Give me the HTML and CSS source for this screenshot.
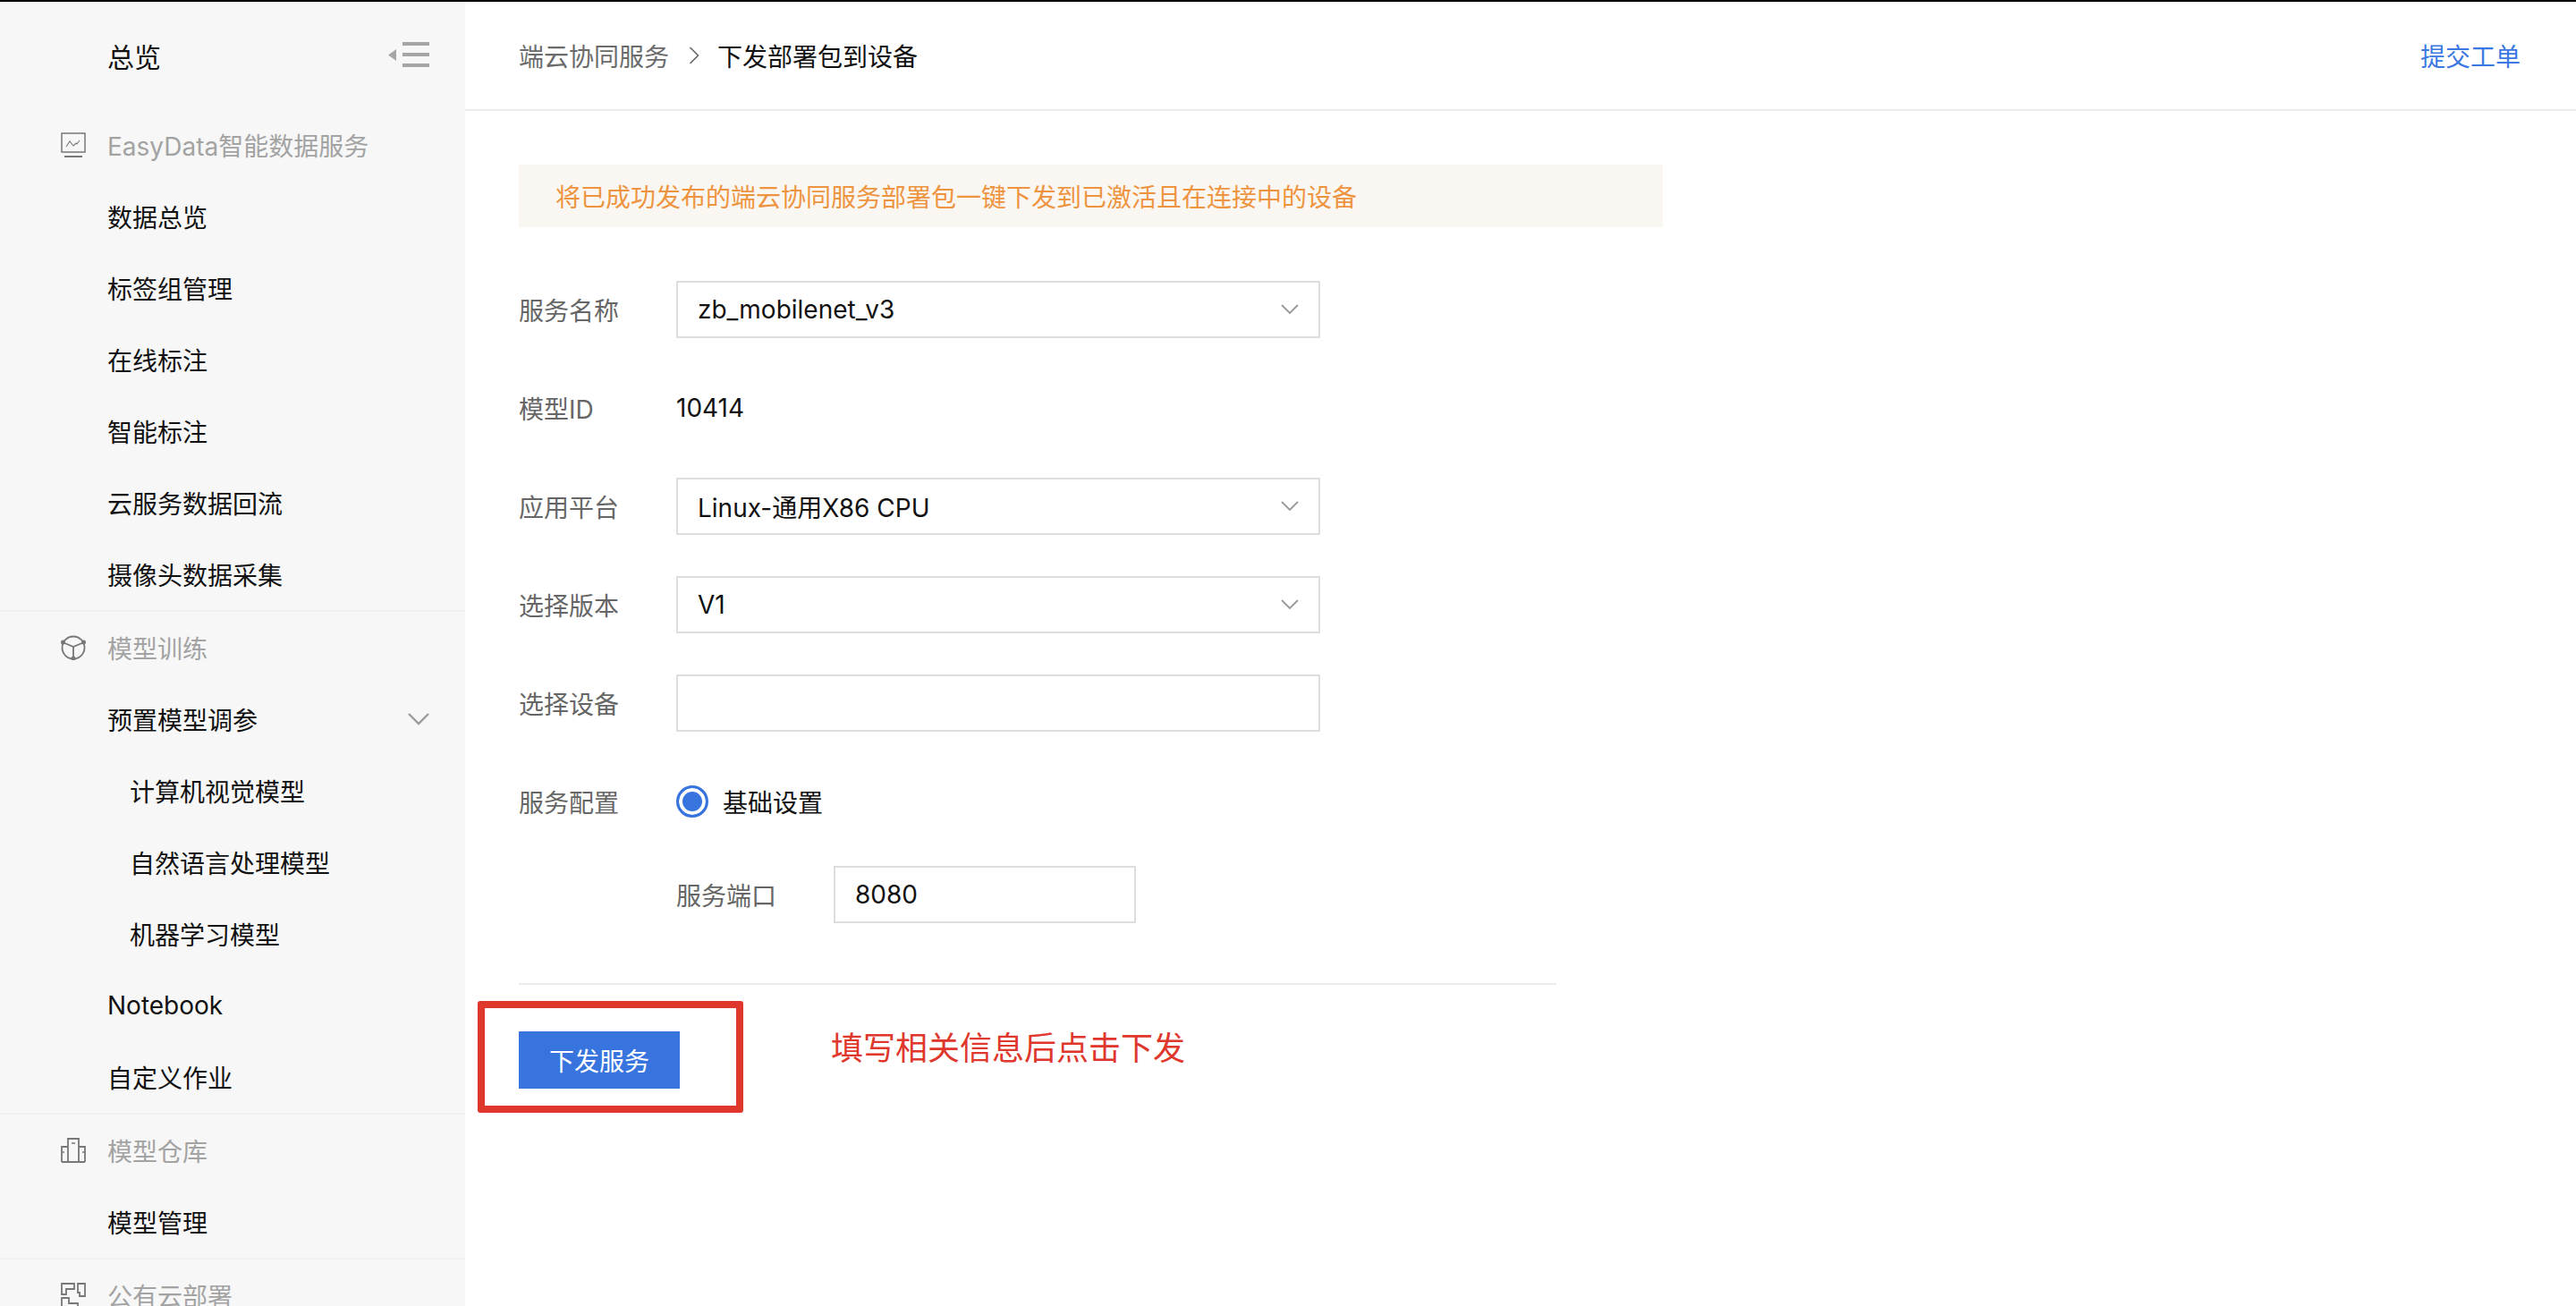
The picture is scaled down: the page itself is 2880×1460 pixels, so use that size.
FILE: index.html
```html
<!DOCTYPE html>
<html lang="zh-CN">
<head>
    <meta charset="UTF-8">
    <title>下发部署包到设备</title>
    <link rel="stylesheet" href="styles.css">
</head>
<body>
    <div class="top-line"></div>
    <div class="layout">
        <aside class="sidebar">
            <div class="sidebar-head">
                <span class="sidebar-title">总览</span>
                <svg class="collapse-icon" width="46" height="28" viewBox="0 0 46 28">
                    <path d="M0 14.5 9 8v13z" fill="#a5a5a5"/>
                    <path d="M16 0h30v4H16zM16 12h30v4H16zM16 24h30v4H16z" fill="#a5a5a5"/>
                </svg>
            </div>

            <div class="nav-group">
                <div class="nav-section">
                    <svg class="nav-icon" width="28" height="28" viewBox="0 0 28 28" fill="none" stroke="#777" stroke-width="1.5">
                        <rect x="1" y="1" width="26" height="21"/>
                        <path d="M6 16l4-6 4 5 3-3 1 1 3-4" stroke-width="1.1"/>
                        <path d="M4 27h20" stroke-width="2"/>
                    </svg>
                    <span>EasyData智能数据服务</span>
                </div>
                <div class="nav-item">数据总览</div>
                <div class="nav-item">标签组管理</div>
                <div class="nav-item">在线标注</div>
                <div class="nav-item">智能标注</div>
                <div class="nav-item">云服务数据回流</div>
                <div class="nav-item">摄像头数据采集</div>
            </div>

            <div class="nav-group">
                <div class="nav-section">
                    <svg class="nav-icon" width="28" height="28" viewBox="0 0 28 28" fill="none" stroke="#777" stroke-width="1.8">
                        <circle cx="14" cy="14" r="12.5"/>
                        <path d="M2 8l12 5 12-5M14 13v13"/>
                        <circle cx="2.5" cy="8" r="1.6" fill="#777"/>
                        <circle cx="25.5" cy="8" r="1.6" fill="#777"/>
                        <circle cx="14" cy="26" r="1.6" fill="#777"/>
                    </svg>
                    <span>模型训练</span>
                </div>
                <div class="nav-item nav-item-open">
                    <span>预置模型调参</span>
                    <svg width="24" height="14" viewBox="0 0 24 14" fill="none" stroke="#9b9b9b" stroke-width="2.4">
                        <path d="M1 1l11 11L23 1"/>
                    </svg>
                </div>
                <div class="nav-item nav-sub">计算机视觉模型</div>
                <div class="nav-item nav-sub">自然语言处理模型</div>
                <div class="nav-item nav-sub">机器学习模型</div>
                <div class="nav-item">Notebook</div>
                <div class="nav-item">自定义作业</div>
            </div>

            <div class="nav-group">
                <div class="nav-section">
                    <svg class="nav-icon" width="28" height="28" viewBox="0 0 28 28" fill="none" stroke="#777" stroke-width="1.8">
                        <path d="M1 27V10h7M27 27V10h-7M8 27V1h12v26zM1 27h26"/>
                        <path d="M12 6h4M1 16h3M24 16h3" stroke-width="1.4"/>
                    </svg>
                    <span>模型仓库</span>
                </div>
                <div class="nav-item">模型管理</div>
            </div>

            <div class="nav-group">
                <div class="nav-section">
                    <svg class="nav-icon" width="28" height="28" viewBox="0 0 28 28" fill="none" stroke="#777" stroke-width="1.8">
                        <path d="M1 1h14v6h-9v6H1zM19 1h8v14h-6v-4h-2zM1 17h8v6h10v4H1z"/>
                    </svg>
                    <span>公有云部署</span>
                </div>
            </div>
        </aside>

        <div class="content">
            <header class="topbar">
                <div class="breadcrumb">
                    <span class="crumb-parent">端云协同服务</span>
                    <svg class="crumb-arrow" width="12" height="20" viewBox="0 0 12 20" fill="none" stroke="#666" stroke-width="1.6">
                        <path d="M1.500 1l9 9-9 9"/>
                    </svg>
                    <span>下发部署包到设备</span>
                </div>
                <a class="ticket-link">提交工单</a>
            </header>

            <main class="main">
                <div class="notice">将已成功发布的端云协同服务部署包一键下发到已激活且在连接中的设备</div>

                <div class="form-row">
                    <label class="form-label">服务名称</label>
                    <div class="select-box">
                        <span>zb_mobilenet_v3</span>
                        <svg width="20" height="12" viewBox="0 0 20 12" fill="none" stroke="#999" stroke-width="1.8"><path d="M1 1l9 9 9-9"/></svg>
                    </div>
                </div>
                <div class="form-row">
                    <label class="form-label">模型ID</label>
                    <span>10414</span>
                </div>
                <div class="form-row">
                    <label class="form-label">应用平台</label>
                    <div class="select-box">
                        <span>Linux-通用X86 CPU</span>
                        <svg width="20" height="12" viewBox="0 0 20 12" fill="none" stroke="#999" stroke-width="1.8"><path d="M1 1l9 9 9-9"/></svg>
                    </div>
                </div>
                <div class="form-row">
                    <label class="form-label">选择版本</label>
                    <div class="select-box">
                        <span>V1</span>
                        <svg width="20" height="12" viewBox="0 0 20 12" fill="none" stroke="#999" stroke-width="1.8"><path d="M1 1l9 9 9-9"/></svg>
                    </div>
                </div>
                <div class="form-row">
                    <label class="form-label">选择设备</label>
                    <div class="select-box"></div>
                </div>
                <div class="form-row">
                    <label class="form-label">服务配置</label>
                    <span class="radio"></span>
                    <span class="radio-text">基础设置</span>
                </div>
                <div class="form-row port-row">
                    <label class="form-label">服务端口</label>
                    <div class="port-box">8080</div>
                </div>

                <div class="form-line"></div>
                <button class="submit-btn">下发服务</button>
            </main>
        </div>
    </div>

    <div class="mark-box"></div>
    <div class="mark-text">填写相关信息后点击下发</div>
</body>
</html>
```

FILE: styles.css
```css
* {
    box-sizing: border-box;
    margin: 0;
    padding: 0;
}

body {
    width: 2880px;
    height: 1460px;
    overflow: hidden;
    position: relative;
    background: #fff;
    color: #111;
    font-family: "Inter", "Noto Sans CJK SC", sans-serif;
    font-size: 28px;
}

.top-line {
    height: 2px;
    background: #000;
}

.layout {
    display: flex;
    height: 1458px;
}

.sidebar {
    width: 520px;
    flex: none;
    background: #f7f7f7;
    overflow: hidden;
}

.sidebar-head {
    height: 120px;
    padding: 0 40px 0 120px;
    display: flex;
    align-items: center;
    justify-content: space-between;
}

.sidebar-title {
    font-size: 30px;
}

.collapse-icon {
    margin-top: -2px;
}

.nav-group {
    border-bottom: 2px solid #f0f0f0;
}

.nav-section,
.nav-item {
    height: 80px;
    display: flex;
    align-items: center;
}

.nav-section {
    padding-left: 68px;
    color: #a3a3a3;
}

.nav-icon {
    margin-right: 24px;
}

.nav-item {
    padding-left: 120px;
}

.nav-item-open {
    justify-content: space-between;
    padding-right: 40px;
}

.nav-sub {
    padding-left: 145px;
}

.content {
    flex: 1;
    display: flex;
    flex-direction: column;
}

.topbar {
    height: 122px;
    padding: 0 62px 0 60px;
    flex: none;
    border-bottom: 2px solid #ececec;
    display: flex;
    align-items: center;
    justify-content: space-between;
}

.breadcrumb {
    display: flex;
    align-items: center;
}

.crumb-parent {
    color: #6b6b6b;
}

.crumb-arrow {
    margin: 0 20px 0 22px;
}

.ticket-link {
    color: #3a78e2;
}

.main {
    padding: 60px 0 0 60px;
}

.notice {
    width: 1279px;
    height: 70px;
    padding-left: 41px;
    margin-bottom: 60px;
    background: #faf7f3;
    color: #ee9440;
    display: flex;
    align-items: center;
}

.form-row {
    height: 64px;
    margin-bottom: 46px;
    display: flex;
    align-items: center;
}

.form-label {
    width: 176px;
    flex: none;
    color: #666;
}

.select-box {
    width: 720px;
    height: 64px;
    padding: 0 22px;
    border: 2px solid #ddd;
    display: flex;
    align-items: center;
    justify-content: space-between;
}

.radio {
    width: 36px;
    height: 36px;
    border: 3px solid #3874de;
    border-radius: 50%;
    background: #3874de;
    box-shadow: inset 0 0 0 4px #fff;
}

.radio-text {
    margin-left: 16px;
}

.port-row {
    margin-top: -6px;
    padding-left: 176px;
}

.port-box {
    width: 338px;
    height: 64px;
    padding: 0 22px;
    border: 2px solid #ddd;
    display: flex;
    align-items: center;
}

.form-line {
    width: 1160px;
    height: 2px;
    margin: 67px 0 52px;
    background: #ececec;
}

.submit-btn {
    width: 180px;
    height: 64px;
    border: none;
    background: #3874de;
    color: #fff;
    font: inherit;
}

.mark-box {
    position: absolute;
    left: 534px;
    top: 1119px;
    width: 297px;
    height: 125px;
    border: 8px solid #e0372d;
    border-radius: 3px;
}

.mark-text {
    position: absolute;
    left: 929px;
    top: 1146px;
    color: #e0372d;
    font-size: 36px;
    line-height: 52px;
}
```
